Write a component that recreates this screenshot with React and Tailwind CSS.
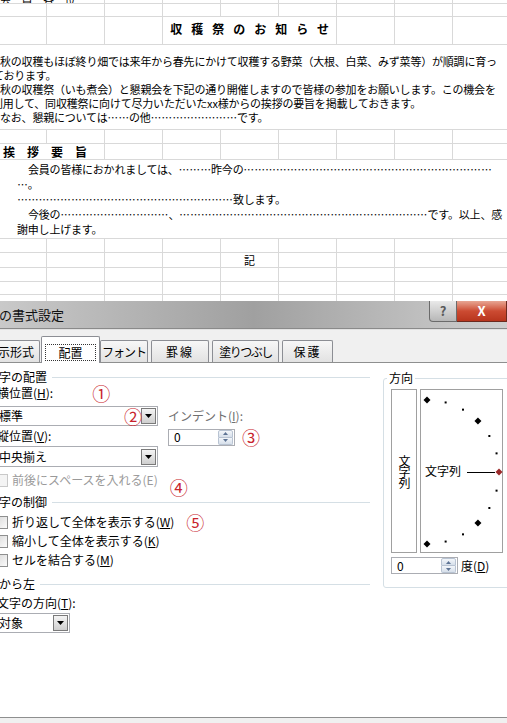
import React from 'react';

function PlainCells() {
  return (
    <>
      <div className="w-[47px] shrink-0 border-r border-[#d9d9d9]" />
      {[0, 1, 2, 3, 4, 5, 6].map((i) => (
        <div key={i} className="w-[58px] shrink-0 border-r border-[#d9d9d9]" />
      ))}
      <div className="flex-1" />
    </>
  );
}

function Row({ h, children, last }) {
  return (
    <div className={`flex shrink-0 overflow-hidden ${last ? '' : 'border-b border-[#d9d9d9]'} ${h}`}>
      {children || <PlainCells />}
    </div>
  );
}

// leader dots, one full-width cell each
function Dots({ n }) {
  return (
    <span className="inline-block whitespace-nowrap">
      {Array.from({ length: n }, (_, i) => (
        <span key={i} className="inline-block w-[10.8px] text-center text-[10.5px] tracking-normal">
          …
        </span>
      ))}
    </span>
  );
}

function Sheet() {
  return (
    <div className="flex flex-col shrink-0 text-[11px] tracking-[-0.2px]">
      <Row h="h-[4px]">
        <div className="w-[47px] shrink-0 border-r border-[#d9d9d9]">
          <div className="-mt-[8px] leading-[14px] whitespace-nowrap">会　員　各　位</div>
        </div>
        {[0, 1, 2, 3, 4, 5, 6].map((i) => (
          <div key={i} className="w-[58px] shrink-0 border-r border-[#d9d9d9]" />
        ))}
        <div className="flex-1" />
      </Row>
      <Row h="h-[13px]" />
      <Row h="h-[28px]">
        <div className="w-[47px] shrink-0 border-r border-[#d9d9d9]" />
        <div className="w-[58px] shrink-0 border-r border-[#d9d9d9]" />
        <div className="w-[58px] shrink-0 border-r border-[#d9d9d9]" />
        <div className="w-[174px] shrink-0 border-r border-[#d9d9d9] flex items-center justify-center pb-[4px] pl-[9px]">
          <span className="text-[12px] font-bold tracking-[9px] whitespace-nowrap">収穫祭のお知らせ</span>
        </div>
        <div className="w-[58px] shrink-0 border-r border-[#d9d9d9]" />
        <div className="w-[58px] shrink-0 border-r border-[#d9d9d9]" />
        <div className="flex-1" />
      </Row>
      <Row h="h-[85px]">
        <div className="flex-1 pt-[9px] leading-[14px] whitespace-nowrap">
          <div>秋の収穫もほぼ終り畑では来年から春先にかけて収穫する野菜（大根、白菜、みず菜等）が順調に育っ</div>
          <div className="-ml-[7px]">ております。</div>
          <div>秋の収穫祭（いも煮会）と懇親会を下記の通り開催しますので皆様の参加をお願いします。この機会を</div>
          <div className="-ml-[8px]">利用して、同収穫祭に向けて尽力いただいたxx様からの挨拶の要旨を掲載しておきます。</div>
          <div>
            なお、懇親については<Dots n={2} />の他<Dots n={8} />です。
          </div>
        </div>
      </Row>
      <Row h="h-[14px]" />
      <Row h="h-[16px]">
        <div className="w-[105px] shrink-0 border-r border-[#d9d9d9] flex items-center pl-[3px]">
          <span className="text-[12px] font-bold tracking-normal whitespace-nowrap">挨　拶　要　旨</span>
        </div>
        {[0, 1, 2, 3, 4, 5].map((i) => (
          <div key={i} className="w-[58px] shrink-0 border-r border-[#d9d9d9]" />
        ))}
        <div className="flex-1" />
      </Row>
      <Row h="h-[79px]">
        <div className="flex-1 pl-[17px] pt-[2px] leading-[14px] whitespace-nowrap">
          <div className="pl-[11px]">
            会員の皆様におかれましては、<Dots n={3} />昨今の<Dots n={23} />
          </div>
          <div>
            <Dots n={1} />。
          </div>
          <div>
            <Dots n={20} />致します。
          </div>
          <div className="pl-[11px]">
            今後の<Dots n={10} />、<Dots n={23} />です。以上、感
          </div>
          <div>謝申し上げます。</div>
        </div>
      </Row>
      <Row h="h-[14px]" />
      <Row h="h-[15px]">
        <div className="w-[47px] shrink-0 border-r border-[#d9d9d9]" />
        <div className="w-[58px] shrink-0 border-r border-[#d9d9d9]" />
        <div className="w-[58px] shrink-0 border-r border-[#d9d9d9]" />
        <div className="w-[58px] shrink-0 border-r border-[#d9d9d9]" />
        <div className="w-[58px] shrink-0 border-r border-[#d9d9d9] flex items-center justify-center">記</div>
        <div className="w-[58px] shrink-0 border-r border-[#d9d9d9]" />
        <div className="w-[58px] shrink-0 border-r border-[#d9d9d9]" />
        <div className="w-[58px] shrink-0 border-r border-[#d9d9d9]" />
        <div className="flex-1" />
      </Row>
      <Row h="h-[14px]" />
      <Row h="h-[13px]" />
      <Row h="h-[6px]" last />
    </div>
  );
}

function Circ({ children, className = '' }) {
  return <span className={`text-[18px] leading-none text-[#c8232c] ${className}`}>{children}</span>;
}

function DropButton() {
  return (
    <div className="w-[15px] h-[16px] shrink-0 border border-[#7a7a7a] bg-linear-to-b from-[#f4f4f4] to-[#cfcfcf] flex items-center justify-center">
      <svg width="7" height="4" viewBox="0 0 7 4">
        <path d="M0 0h7L3.5 4z" fill="#000" />
      </svg>
    </div>
  );
}

function Select({ className = '', text, children }) {
  return (
    <div className={`relative flex items-center border border-[#abadb3] bg-white ${className}`}>
      <span className="pl-[1px] text-[12px] leading-none whitespace-nowrap">{text}</span>
      {children}
      <div className="ml-auto mr-px">
        <DropButton />
      </div>
    </div>
  );
}

function Spin({ w }) {
  return (
    <div className={`flex items-center h-[17px] border border-[#abadb3] bg-white ${w}`}>
      <span className="pl-[5px] text-[12px] leading-none">0</span>
      <div className="ml-auto mr-px flex flex-col h-[15px] w-[15px]">
        <div className="flex-1 flex items-center justify-center bg-linear-to-b from-[#f3f6fa] to-[#d6dfea] border border-[#b8c3d2] rounded-t-[2px]">
          <svg width="5" height="3" viewBox="0 0 5 3">
            <path d="M0 3h5L2.5 0z" fill="#5d7394" />
          </svg>
        </div>
        <div className="flex-1 flex items-center justify-center bg-linear-to-b from-[#f3f6fa] to-[#d6dfea] border border-t-0 border-[#b8c3d2] rounded-b-[2px]">
          <svg width="5" height="3" viewBox="0 0 5 3">
            <path d="M0 0h5L2.5 3z" fill="#5d7394" />
          </svg>
        </div>
      </div>
    </div>
  );
}

function Group({ label, className = '' }) {
  return (
    <div className={`flex items-center h-[16px] pr-[5px] ${className}`}>
      <span className="text-[12px] leading-none whitespace-nowrap">{label}</span>
      <div className="ml-[5px] flex-1 h-px bg-[#d5dfe5]" />
    </div>
  );
}

function Check({ label, disabled, className = '', children }) {
  return (
    <div className={`flex items-center h-[16px] pl-[8px] ${className}`}>
      <div
        className={`w-[13px] h-[13px] shrink-0 border ${
          disabled ? 'border-[#c9c9c9] bg-[#f4f4f4]' : 'border-[#8e8f8f] bg-linear-to-br from-[#d9d9d9] to-[#fbfbfb]'
        }`}
      />
      <span className={`ml-[4px] text-[12px] leading-none whitespace-nowrap ${disabled ? 'text-[#9a9a9a]' : ''}`}>{label}</span>
      {children}
    </div>
  );
}

const dial = [90, 75, 60, 45, 30, 15, 0, -15, -30, -45, -60, -75, -90];

function Dial() {
  return (
    <svg className="absolute inset-0" width="83" height="164" viewBox="0 0 83 164">
      {dial.map((a) => {
        const r = (a * Math.PI) / 180;
        const x = 6 + 72 * Math.cos(r);
        const y = 82 - 72 * Math.sin(r);
        if (a === 0) {
          return <path key={a} d={`M${x} ${y - 3.5}L${x + 3.5} ${y}L${x} ${y + 3.5}L${x - 3.5} ${y}z`} fill="#9b2a2a" />;
        }
        if (a % 45 === 0) {
          return <path key={a} d={`M${x} ${y - 3.5}L${x + 3.5} ${y}L${x} ${y + 3.5}L${x - 3.5} ${y}z`} fill="#000" />;
        }
        return <rect key={a} x={x - 1} y={y - 1} width="2" height="2" fill="#000" />;
      })}
      <line x1="46" y1="82.5" x2="74" y2="82.5" stroke="#000" strokeWidth="1" />
    </svg>
  );
}

function Dialog() {
  return (
    <div className="flex flex-col flex-1 bg-[#f0f0f0] text-[12px]">
      <div className="flex h-[28px] shrink-0 bg-linear-to-r from-[#c9c9c9] via-[#a0a0a0] to-[#cfcfcf] border-b border-[#8a8a8a]">
        <div className="flex items-center -ml-[27px] text-[13px] whitespace-nowrap text-[#111]">セルの書式設定</div>
        <div className="ml-auto flex items-start">
          <div className="w-[28px] h-[21px] border border-t-0 border-[#6b6b6b] rounded-bl-[4px] bg-linear-to-b from-[#e9e9e9] to-[#b7b7b7] flex items-center justify-center text-[13px] font-bold text-[#5a5a5a]">
            ?
          </div>
          <div className="w-[50px] h-[21px] shrink-0 border border-t-0 border-l-0 border-[#6b2a1f] bg-linear-to-b from-[#e7a593] via-[#cc4b32] to-[#b8351d] flex items-center justify-center text-[13px] font-bold text-white">
            X
          </div>
        </div>
      </div>
      <div className="flex items-end h-[33px] shrink-0 border-t border-[#e2e2e2]">
        <div className="-ml-[20px] w-[60px] h-[22px] flex items-center justify-center border border-b-0 border-[#8c8e94] rounded-t-[2px] bg-linear-to-b from-[#f7f7f7] to-[#e2e2e2] whitespace-nowrap">
          表示形式
        </div>
        <div className="relative z-10 -mb-px ml-px w-[59px] h-[27px] flex items-end justify-center pb-[2px] border border-b-0 border-[#8c8e94] rounded-t-[2px] bg-white">
          <span className="border border-dotted border-[#333] px-[12px] leading-[15px]">配置</span>
        </div>
        <div className="w-[48px] h-[22px] flex items-center justify-center border border-b-0 border-[#8c8e94] rounded-t-[2px] bg-linear-to-b from-[#f7f7f7] to-[#e2e2e2] whitespace-nowrap tracking-[-1px]">
          フォント
        </div>
        <div className="ml-[3px] w-[58px] h-[22px] flex items-center justify-center border border-b-0 border-[#8c8e94] rounded-t-[2px] bg-linear-to-b from-[#f7f7f7] to-[#e2e2e2] whitespace-nowrap tracking-[2px]">
          罫線
        </div>
        <div className="ml-[3px] w-[67px] h-[22px] flex items-center justify-center border border-b-0 border-[#8c8e94] rounded-t-[2px] bg-linear-to-b from-[#f7f7f7] to-[#e2e2e2] whitespace-nowrap tracking-[-1.5px]">
          塗りつぶし
        </div>
        <div className="ml-[3px] w-[51px] h-[22px] flex items-center justify-center border border-b-0 border-[#8c8e94] rounded-t-[2px] bg-linear-to-b from-[#f7f7f7] to-[#e2e2e2] whitespace-nowrap tracking-[2px]">
          保護
        </div>
      </div>
      <div className="flex items-start h-[356px] shrink-0 bg-white border-t border-b border-[#8e8f8f] overflow-hidden">
        <div className="-ml-[13px] w-[388px] shrink-0 pt-[6px] flex flex-col">
          <Group label="文字の配置" />
          <div className="pl-[10px] flex flex-col">
            <div className="flex items-center h-[16px]">
              <span className="whitespace-nowrap leading-none">
                横位置(<u>H</u>):
              </span>
              <Circ className="ml-[39px]">①</Circ>
            </div>
            <div className="flex">
              <div className="flex flex-col w-[161px] shrink-0">
                <Select className="mt-[5px] h-[20px]" text="標準">
                  <Circ className="absolute right-[15px] top-1/2 -translate-y-1/2">②</Circ>
                </Select>
                <div className="mt-[2px] h-[16px] flex items-center leading-none whitespace-nowrap">
                  縦位置(<u>V</u>):
                </div>
                <Select className="mt-[2px] h-[21px]" text="中央揃え" />
              </div>
              <div className="ml-[10px] flex flex-col">
                <div className="mt-[7px] h-[16px] flex items-center leading-none whitespace-nowrap text-[#707070]">
                  インデント(<u>I</u>):
                </div>
                <div className="mt-[4px] flex items-center">
                  <Spin w="w-[67px]" />
                  <Circ className="ml-[7px]">③</Circ>
                </div>
              </div>
            </div>
          </div>
          <Check className="mt-[5px]" label="前後にスペースを入れる(E)" disabled>
            <Circ className="ml-[12px] translate-y-[7px]">④</Circ>
          </Check>
          <Group className="mt-[6px]" label="文字の制御" />
          <Check
            className="mt-[4px]"
            label={
              <>
                折り返して全体を表示する(<u>W</u>)
              </>
            }
          >
            <Circ className="ml-[12px]">⑤</Circ>
          </Check>
          <Check
            className="mt-[3px]"
            label={
              <>
                縮小して全体を表示する(<u>K</u>)
              </>
            }
          />
          <Check
            className="mt-[3px]"
            label={
              <>
                セルを結合する(<u>M</u>)
              </>
            }
          />
          <Group className="mt-[8px]" label="右から左" />
          <div className="pl-[10px] flex flex-col">
            <div className="mt-[3px] h-[16px] flex items-center leading-none whitespace-nowrap">
              文字の方向(<u>T</u>):
            </div>
            <Select className="mt-[2px] h-[20px] w-[73px]" text="対象" />
          </div>
        </div>
        <fieldset className="ml-[8px] mt-[7px] w-[140px] shrink-0 border border-[#d5dfe5] rounded-[3px] p-0">
          <legend className="ml-[3px] px-[2px] leading-[16px]">方向</legend>
          <div className="pl-[7px] pb-[13px]">
            <div className="mt-[3px] flex">
              <div className="w-[26px] h-[164px] border border-[#a0a0a0] flex items-center justify-center">
                <span className="[writing-mode:vertical-rl] tracking-[-1px] leading-none">文字列</span>
              </div>
              <div className="relative ml-[3px] w-[83px] h-[164px] border border-[#a0a0a0] flex items-center pl-[4px]">
                <Dial />
                <span className="relative leading-none whitespace-nowrap">文字列</span>
              </div>
            </div>
            <div className="mt-[4px] flex items-center">
              <Spin w="w-[67px]" />
              <span className="ml-[3px] leading-none whitespace-nowrap">
                度(<u>D</u>)
              </span>
            </div>
          </div>
        </fieldset>
      </div>
    </div>
  );
}

export default function App() {
  return (
    <div className="w-[507px] h-[723px] overflow-hidden bg-white text-black flex flex-col font-['Noto_Sans_CJK_JP',sans-serif]">
      <Sheet />
      <Dialog />
    </div>
  );
}
